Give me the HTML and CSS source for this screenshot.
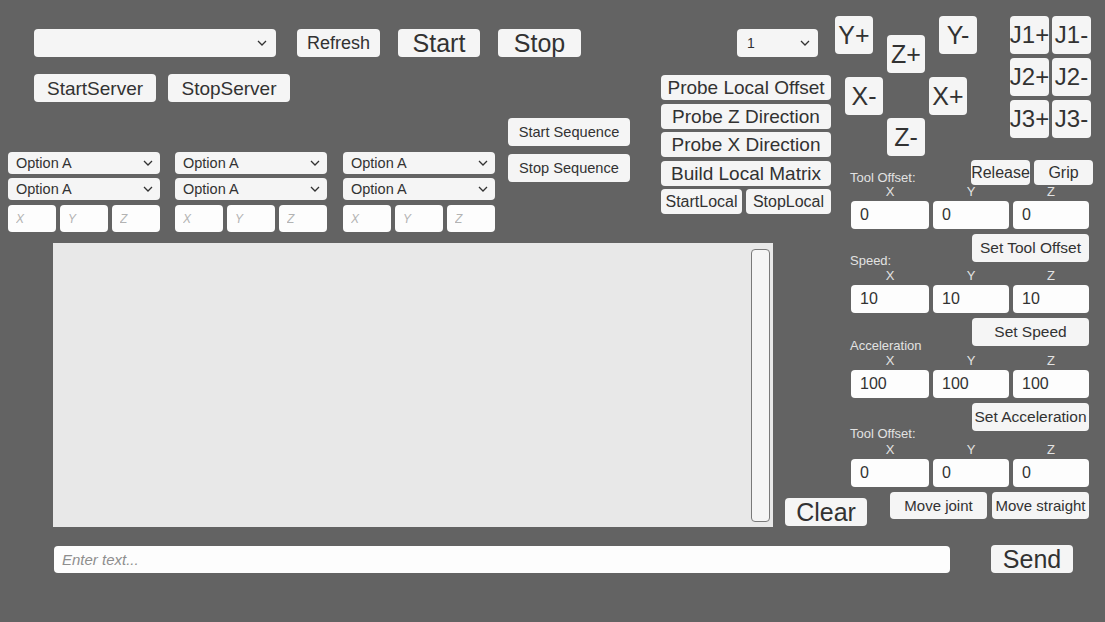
FILE: index.html
```html
<!DOCTYPE html>
<html>
<head>
<meta charset="utf-8">
<link rel="stylesheet" href="styles.css">
</head>
<body>
<div class="page">
  <div class="upper">
    <div class="left">
      <div class="row1">
        <div class="dd dd-main"><span class="dd-text"></span><svg class="chev" viewBox="0 0 10 6"><polyline points="1,1 5,5 9,1"/></svg></div>
        <button class="btn btn-refresh">Refresh</button>
        <button class="btn btn-big btn-start">Start</button>
        <button class="btn btn-big btn-stop">Stop</button>
        <div class="dd dd-num"><span class="dd-text">1</span><svg class="chev" viewBox="0 0 10 6"><polyline points="1,1 5,5 9,1"/></svg></div>
      </div>
      <div class="mid">
        <div class="col-a">
          <div class="server-row">
            <button class="btn btn-server">StartServer</button>
            <button class="btn btn-server">StopServer</button>
          </div>
          <div class="groups">
            <div class="group">
              <div class="dd dd-opt"><span class="dd-text">Option A</span><svg class="chev" viewBox="0 0 10 6"><polyline points="1,1 5,5 9,1"/></svg></div>
              <div class="dd dd-opt"><span class="dd-text">Option A</span><svg class="chev" viewBox="0 0 10 6"><polyline points="1,1 5,5 9,1"/></svg></div>
              <div class="xyz"><input class="field" placeholder="X"><input class="field" placeholder="Y"><input class="field" placeholder="Z"></div>
            </div>
            <div class="group">
              <div class="dd dd-opt"><span class="dd-text">Option A</span><svg class="chev" viewBox="0 0 10 6"><polyline points="1,1 5,5 9,1"/></svg></div>
              <div class="dd dd-opt"><span class="dd-text">Option A</span><svg class="chev" viewBox="0 0 10 6"><polyline points="1,1 5,5 9,1"/></svg></div>
              <div class="xyz"><input class="field" placeholder="X"><input class="field" placeholder="Y"><input class="field" placeholder="Z"></div>
            </div>
            <div class="group">
              <div class="dd dd-opt"><span class="dd-text">Option A</span><svg class="chev" viewBox="0 0 10 6"><polyline points="1,1 5,5 9,1"/></svg></div>
              <div class="dd dd-opt"><span class="dd-text">Option A</span><svg class="chev" viewBox="0 0 10 6"><polyline points="1,1 5,5 9,1"/></svg></div>
              <div class="xyz"><input class="field" placeholder="X"><input class="field" placeholder="Y"><input class="field" placeholder="Z"></div>
            </div>
          </div>
        </div>
        <div class="seq">
          <button class="btn btn-seq">Start Sequence</button>
          <button class="btn btn-seq">Stop Sequence</button>
        </div>
        <div class="probe">
          <button class="btn btn-probe">Probe Local Offset</button>
          <button class="btn btn-probe">Probe Z Direction</button>
          <button class="btn btn-probe">Probe X Direction</button>
          <button class="btn btn-probe">Build Local Matrix</button>
          <div class="local-row">
            <button class="btn btn-local btn-startlocal">StartLocal</button>
            <button class="btn btn-local btn-stoplocal">StopLocal</button>
          </div>
        </div>
      </div>
      <div class="log-row">
        <div class="log"><div class="handle"></div></div>
        <button class="btn btn-big btn-clear">Clear</button>
      </div>
    </div>
    <div class="right">
      <div class="jog">
        <div class="pad">
          <div class="pad-col pad-col1">
            <button class="btn btn-jog btn-yplus">Y+</button>
            <button class="btn btn-jog btn-xminus">X-</button>
          </div>
          <div class="pad-col pad-col2">
            <button class="btn btn-jog btn-zplus">Z+</button>
            <button class="btn btn-jog btn-zminus">Z-</button>
          </div>
          <div class="pad-col pad-col3">
            <button class="btn btn-jog btn-yminus">Y-</button>
            <button class="btn btn-jog btn-xplus">X+</button>
          </div>
        </div>
        <div class="joints">
          <button class="btn btn-joint">J1+</button>
          <button class="btn btn-joint">J1-</button>
          <button class="btn btn-joint">J2+</button>
          <button class="btn btn-joint">J2-</button>
          <button class="btn btn-joint">J3+</button>
          <button class="btn btn-joint">J3-</button>
        </div>
      </div>
      <div class="panel">
        <div class="head-row">
          <span class="label">Tool Offset:</span>
          <div class="grip-btns">
            <button class="btn btn-grip">Release</button>
            <button class="btn btn-grip">Grip</button>
          </div>
        </div>
        <div class="axis-row"><span>X</span><span>Y</span><span>Z</span></div>
        <div class="val-row"><input class="val" value="0"><input class="val" value="0"><input class="val" value="0"></div>
        <div class="act-row">
          <span class="label label-drop">Speed:</span>
          <button class="btn btn-set btn-set-tool">Set Tool Offset</button>
        </div>
        <div class="axis-row axis-after"><span>X</span><span>Y</span><span>Z</span></div>
        <div class="val-row"><input class="val" value="10"><input class="val" value="10"><input class="val" value="10"></div>
        <div class="act-row">
          <span class="label label-drop label-acc">Acceleration</span>
          <button class="btn btn-set btn-set-speed">Set Speed</button>
        </div>
        <div class="axis-row axis-after axis-acc"><span>X</span><span>Y</span><span>Z</span></div>
        <div class="val-row"><input class="val" value="100"><input class="val" value="100"><input class="val" value="100"></div>
        <div class="act-row">
          <span class="label label-drop label-tool2">Tool Offset:</span>
          <button class="btn btn-set btn-set-acc">Set Acceleration</button>
        </div>
        <div class="axis-row axis-after axis-tool2"><span>X</span><span>Y</span><span>Z</span></div>
        <div class="val-row"><input class="val" value="0"><input class="val" value="0"><input class="val" value="0"></div>
        <div class="move-row">
          <button class="btn btn-move">Move joint</button>
          <button class="btn btn-move">Move straight</button>
        </div>
      </div>
    </div>
  </div>
  <div class="bottom">
    <input class="chat" placeholder="Enter text...">
    <button class="btn btn-big btn-send">Send</button>
  </div>
</div>
</body>
</html>
```

FILE: styles.css
```css
* { box-sizing: border-box; }
html, body { margin: 0; padding: 0; }
body {
  background: #636363;
  font-family: "Liberation Sans", Arial, sans-serif;
  color: #323232;
}
.page {
  width: 1105px;
  height: 622px;
  background: #636363;
  display: flex;
  flex-direction: column;
  overflow: hidden;
}
.upper { display: flex; }
.left { width: 835px; flex: none; display: flex; flex-direction: column; }
.right { flex: 1; display: flex; flex-direction: column; }

/* generic button */
.btn {
  font-family: "Liberation Sans", Arial, sans-serif;
  color: #323232;
  background: #f5f5f5;
  border: none;
  border-radius: 4px;
  padding: 0;
  margin: 0;
  display: flex;
  align-items: center;
  justify-content: center;
  white-space: nowrap;
  flex: none;
  line-height: 1;
}
.btn-big { font-size: 25px; }

/* dropdowns */
.dd {
  background: #f5f5f5;
  border-radius: 4px;
  display: flex;
  align-items: center;
  justify-content: space-between;
  flex: none;
}
.dd-text { font-size: 14px; color: #323232; }
.chev { width: 10px; height: 6px; fill: none; stroke: #323232; stroke-width: 1.3; }

/* row 1 */
.row1 { display: flex; padding-top: 29px; height: 57px; }
.dd-main { width: 242px; height: 28px; margin-left: 34px; padding: 0 9px 0 10px; }
.btn-refresh { width: 83px; height: 28px; margin-left: 21px; font-size: 18px; }
.btn-start { width: 82px; height: 28px; margin-left: 18px; }
.btn-stop { width: 83px; height: 28px; margin-left: 18px; }
.dd-num { width: 81px; height: 28px; margin-left: 156px; padding: 0 8px 0 10px; }

/* mid */
.mid { display: flex; }
.col-a { width: 500px; flex: none; display: flex; flex-direction: column; }
.server-row { display: flex; gap: 12px; margin-top: 17px; padding-left: 34px; }
.btn-server { width: 122px; height: 28px; font-size: 19px; }
.groups { display: flex; margin-top: 50px; padding-left: 8px; gap: 15px; }
.group { width: 152px; flex: none; display: flex; flex-direction: column; gap: 4px; }
.group + .group + .group { margin-left: 1px; }
.dd-opt { height: 22px; padding: 0 7px 0 8px; }
.dd-opt .dd-text { font-size: 14.5px; }
.xyz { display: grid; grid-template-columns: 48px 48px 48px; gap: 4px; margin-top: 1px; }
.field {
  width: 48px; height: 27px;
  border: none; border-radius: 4px;
  background: #fdfdfd;
  padding: 0 0 0 8px;
  font-family: "Liberation Sans", Arial, sans-serif;
  font-size: 12px;
  outline: none;
}
.field::placeholder { color: #b3b3b3; font-style: italic; }

.seq { display: flex; flex-direction: column; gap: 8px; margin-left: 8px; margin-top: 61px; flex: none; }
.btn-seq { width: 122px; height: 28px; font-size: 14.6px; }

.probe { display: flex; flex-direction: column; gap: 3.5px; margin-left: 31px; margin-top: 18px; width: 170px; flex: none; }
.btn-probe { width: 170px; height: 25px; font-size: 19px; }
.local-row { display: flex; gap: 4px; }
.btn-local { height: 25px; font-size: 16px; }
.btn-startlocal { width: 81px; }
.btn-stoplocal { width: 85px; }

/* log */
.log-row { display: flex; margin-top: 11px; padding-left: 53px; align-items: flex-end; }
.log {
  width: 720px; height: 284px;
  flex: none;
  background: #e8e8e8;
  display: flex;
  justify-content: flex-end;
  padding: 6px 3px 5px 0;
}
.handle {
  width: 19px; height: 100%;
  background: #f5f5f5;
  border: 1px solid #7a7a7a;
  border-radius: 4px;
}
.btn-clear { width: 82px; height: 28px; margin-left: 12px; margin-bottom: 1px; }

/* right: jog */
.jog { display: flex; height: 160px; }
.pad { display: flex; }
.pad-col { display: flex; flex-direction: column; }
.pad-col1 { width: 49px; }
.pad-col2 { margin-left: 3px; width: 38px; }
.pad-col3 { margin-left: 4px; width: 49px; }
.btn-jog { width: 38px; height: 38px; font-size: 25px; }
.btn-yplus { margin-top: 16px; }
.btn-xminus { margin-top: 23px; margin-left: 10px; }
.btn-zplus { margin-top: 35px; }
.btn-zminus { margin-top: 45px; }
.btn-yminus { margin-top: 16px; margin-left: 10px; }
.btn-xplus { margin-top: 23px; }
.joints {
  display: grid;
  grid-template-columns: 39px 39px;
  grid-auto-rows: 38px;
  column-gap: 3px;
  row-gap: 4px;
  margin-left: 32px;
  margin-top: 16px;
  align-self: flex-start;
}
.btn-joint { width: 39px; height: 38px; font-size: 24px; }

/* right: panel */
.panel { margin-left: 16px; width: 242px; display: flex; flex-direction: column; }
.label { font-size: 13px; line-height: 14px; color: #e2e2e2; margin-left: -1px; }
.head-row { display: flex; justify-content: space-between; align-items: flex-end; height: 25px; }
.grip-btns { display: flex; gap: 4px; align-self: stretch; }
.btn-grip { width: 59px; height: 25px; font-size: 16px; }
.axis-row {
  display: grid;
  grid-template-columns: 78px 76px 76px;
  column-gap: 4px;
  height: 14px;
  font-size: 13px;
  line-height: 14px;
  color: #e2e2e2;
  text-align: center;
}
.axis-after { margin-top: 7px; }
.axis-acc { margin-top: 8px; }
.axis-tool2 { margin-top: 12px; }
.val-row {
  display: grid;
  grid-template-columns: 78px 76px 76px;
  column-gap: 4px;
  margin-top: 2px;
}
.val {
  height: 28px; width: 100%;
  border: none; border-radius: 4px;
  background: #fdfdfd;
  padding: 0 0 0 9px;
  font-family: "Liberation Sans", Arial, sans-serif;
  font-size: 16px;
  color: #323232;
  outline: none;
}
.act-row {
  display: flex;
  justify-content: space-between;
  align-items: flex-end;
  margin-top: 5px;
  padding-right: 4px;
}
.label-drop { margin-bottom: -6px; }
.label-acc { margin-bottom: -7px; }
.label-tool2 { margin-bottom: -10px; }
.btn-set { width: 117px; height: 28px; font-size: 15.5px; }
.move-row { display: flex; justify-content: flex-end; gap: 5px; margin-top: 5px; padding-right: 4px; }
.btn-move { width: 97px; height: 27px; font-size: 15px; }

/* bottom */
.bottom { display: flex; align-items: center; margin-top: 18px; padding-left: 54px; }
.chat {
  width: 896px; height: 27px;
  border: none; border-radius: 4px;
  background: #fdfdfd;
  padding: 0 0 0 8px;
  font-family: "Liberation Sans", Arial, sans-serif;
  font-size: 15px;
  outline: none;
}
.chat::placeholder { color: #8e8e8e; font-style: italic; }
.btn-send { width: 82px; height: 28px; margin-left: 41px; }
```
